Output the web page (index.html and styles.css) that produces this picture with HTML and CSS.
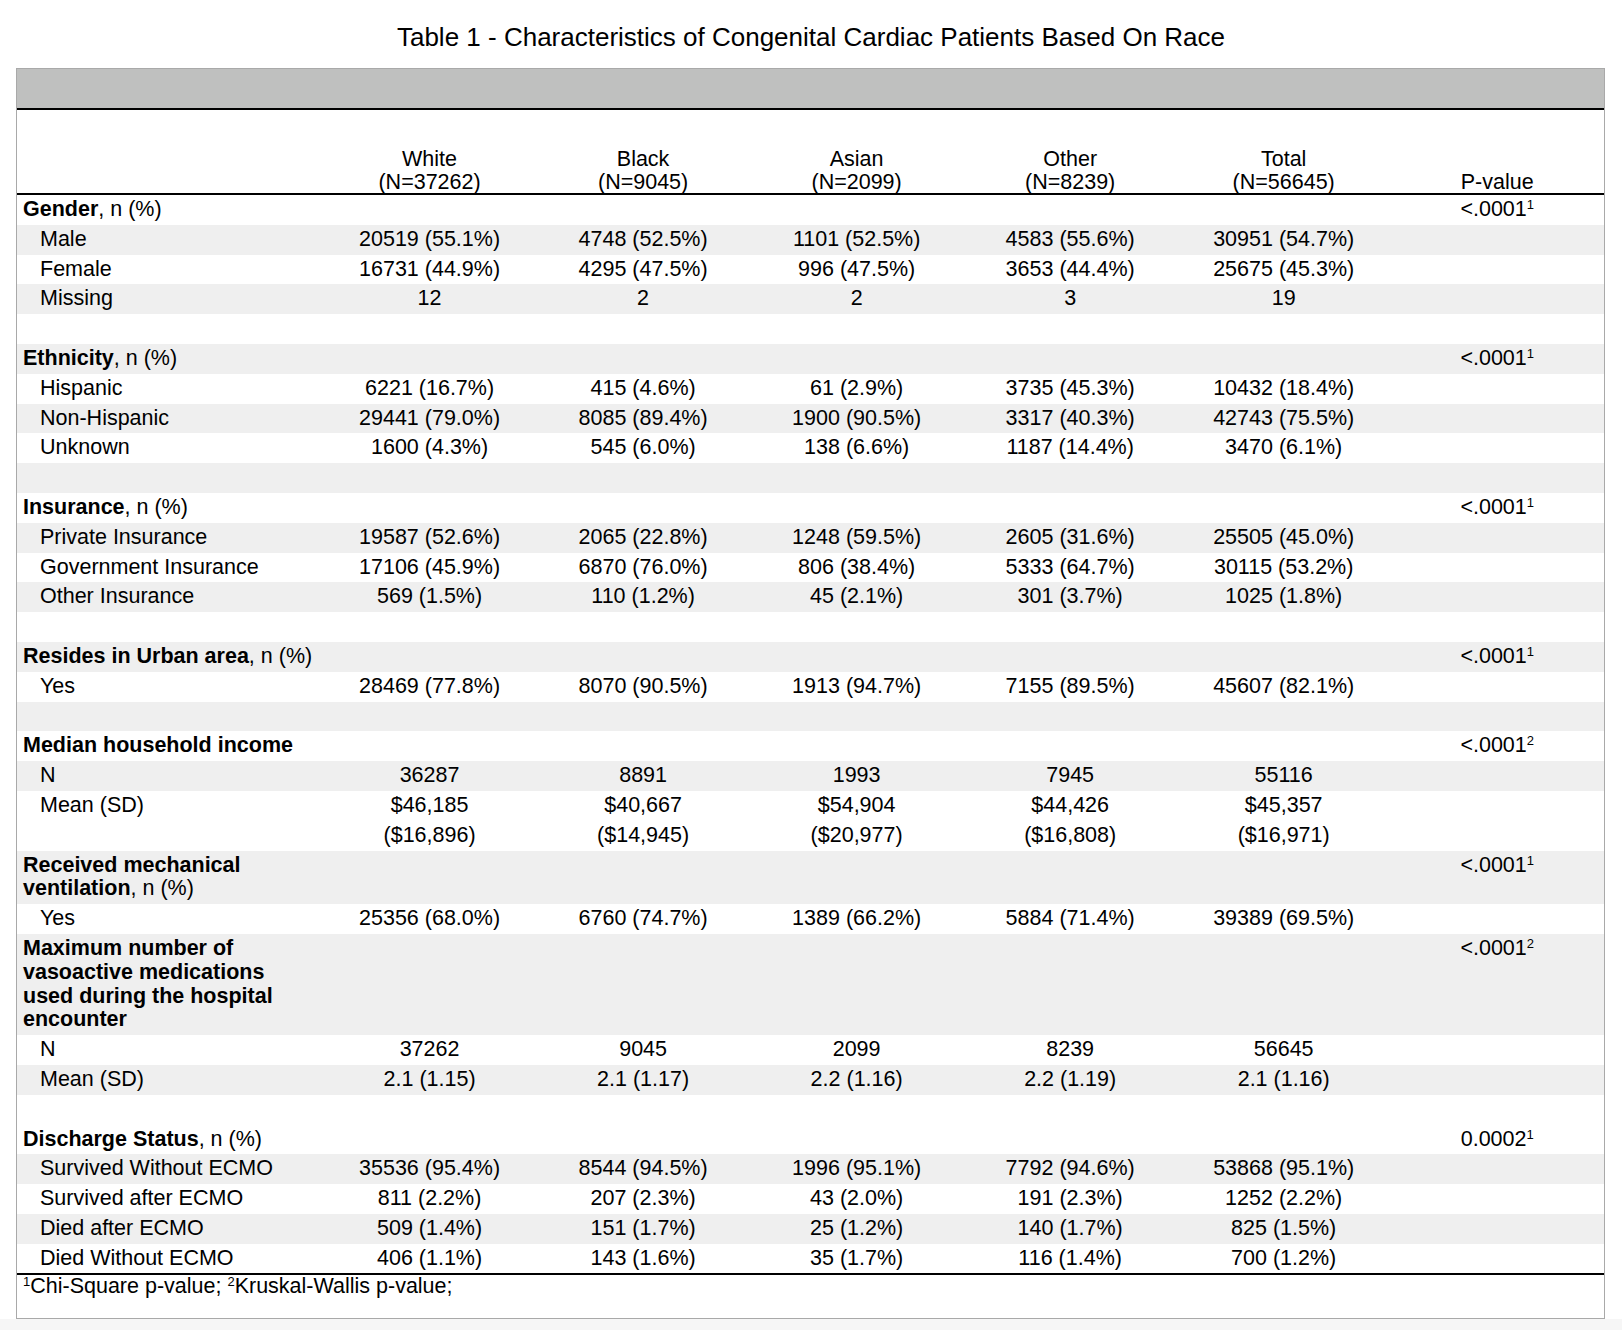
FILE: index.html
```html
<!DOCTYPE html>
<html lang="en">
<head>
<meta charset="utf-8">
<title>Table 1</title>
<link rel="stylesheet" href="styles.css">
</head>
<body>
<div class="page">
  <h1 class="title">Table 1 - Characteristics of Congenital Cardiac Patients Based On Race</h1>
  <div class="box">
    <div class="band"></div>
    <table class="t1">
      <colgroup>
        <col class="c-lab"><col class="c-num"><col class="c-num"><col class="c-num"><col class="c-num"><col class="c-num"><col class="c-p">
      </colgroup>
      <thead>
        <tr>
          <th class="lab"></th>
          <th>White<br>(N=37262)</th>
          <th>Black<br>(N=9045)</th>
          <th>Asian<br>(N=2099)</th>
          <th>Other<br>(N=8239)</th>
          <th>Total<br>(N=56645)</th>
          <th>P-value</th>
        </tr>
      </thead>
      <tbody>
        <tr><td class="var"><b>Gender</b>, n (%)</td><td></td><td></td><td></td><td></td><td></td><td class="p">&lt;.0001<sup>1</sup></td></tr>
        <tr class="g"><td class="sub">Male</td><td>20519 (55.1%)</td><td>4748 (52.5%)</td><td>1101 (52.5%)</td><td>4583 (55.6%)</td><td>30951 (54.7%)</td><td></td></tr>
        <tr><td class="sub">Female</td><td>16731 (44.9%)</td><td>4295 (47.5%)</td><td>996 (47.5%)</td><td>3653 (44.4%)</td><td>25675 (45.3%)</td><td></td></tr>
        <tr class="g"><td class="sub">Missing</td><td>12</td><td>2</td><td>2</td><td>3</td><td>19</td><td></td></tr>
        <tr><td class="var">&nbsp;</td><td></td><td></td><td></td><td></td><td></td><td></td></tr>
        <tr class="g"><td class="var"><b>Ethnicity</b>, n (%)</td><td></td><td></td><td></td><td></td><td></td><td class="p">&lt;.0001<sup>1</sup></td></tr>
        <tr><td class="sub">Hispanic</td><td>6221 (16.7%)</td><td>415 (4.6%)</td><td>61 (2.9%)</td><td>3735 (45.3%)</td><td>10432 (18.4%)</td><td></td></tr>
        <tr class="g"><td class="sub">Non-Hispanic</td><td>29441 (79.0%)</td><td>8085 (89.4%)</td><td>1900 (90.5%)</td><td>3317 (40.3%)</td><td>42743 (75.5%)</td><td></td></tr>
        <tr><td class="sub">Unknown</td><td>1600 (4.3%)</td><td>545 (6.0%)</td><td>138 (6.6%)</td><td>1187 (14.4%)</td><td>3470 (6.1%)</td><td></td></tr>
        <tr class="g"><td class="var">&nbsp;</td><td></td><td></td><td></td><td></td><td></td><td></td></tr>
        <tr><td class="var"><b>Insurance</b>, n (%)</td><td></td><td></td><td></td><td></td><td></td><td class="p">&lt;.0001<sup>1</sup></td></tr>
        <tr class="g"><td class="sub">Private Insurance</td><td>19587 (52.6%)</td><td>2065 (22.8%)</td><td>1248 (59.5%)</td><td>2605 (31.6%)</td><td>25505 (45.0%)</td><td></td></tr>
        <tr><td class="sub">Government Insurance</td><td>17106 (45.9%)</td><td>6870 (76.0%)</td><td>806 (38.4%)</td><td>5333 (64.7%)</td><td>30115 (53.2%)</td><td></td></tr>
        <tr class="g"><td class="sub">Other Insurance</td><td>569 (1.5%)</td><td>110 (1.2%)</td><td>45 (2.1%)</td><td>301 (3.7%)</td><td>1025 (1.8%)</td><td></td></tr>
        <tr><td class="var">&nbsp;</td><td></td><td></td><td></td><td></td><td></td><td></td></tr>
        <tr class="g"><td class="var"><b>Resides in Urban area</b>, n (%)</td><td></td><td></td><td></td><td></td><td></td><td class="p">&lt;.0001<sup>1</sup></td></tr>
        <tr><td class="sub">Yes</td><td>28469 (77.8%)</td><td>8070 (90.5%)</td><td>1913 (94.7%)</td><td>7155 (89.5%)</td><td>45607 (82.1%)</td><td></td></tr>
        <tr class="g"><td class="var">&nbsp;</td><td></td><td></td><td></td><td></td><td></td><td></td></tr>
        <tr><td class="var"><b>Median household income</b></td><td></td><td></td><td></td><td></td><td></td><td class="p">&lt;.0001<sup>2</sup></td></tr>
        <tr class="g"><td class="sub">N</td><td>36287</td><td>8891</td><td>1993</td><td>7945</td><td>55116</td><td></td></tr>
        <tr class="dbl"><td class="sub">Mean (SD)</td><td>$46,185<br>($16,896)</td><td>$40,667<br>($14,945)</td><td>$54,904<br>($20,977)</td><td>$44,426<br>($16,808)</td><td>$45,357<br>($16,971)</td><td></td></tr>
        <tr class="g"><td class="var"><b>Received mechanical<br>ventilation</b>, n (%)</td><td></td><td></td><td></td><td></td><td></td><td class="p">&lt;.0001<sup>1</sup></td></tr>
        <tr><td class="sub">Yes</td><td>25356 (68.0%)</td><td>6760 (74.7%)</td><td>1389 (66.2%)</td><td>5884 (71.4%)</td><td>39389 (69.5%)</td><td></td></tr>
        <tr class="g"><td class="var"><b>Maximum number of<br>vasoactive medications<br>used during the hospital<br>encounter</b></td><td></td><td></td><td></td><td></td><td></td><td class="p">&lt;.0001<sup>2</sup></td></tr>
        <tr><td class="sub">N</td><td>37262</td><td>9045</td><td>2099</td><td>8239</td><td>56645</td><td></td></tr>
        <tr class="g"><td class="sub">Mean (SD)</td><td>2.1 (1.15)</td><td>2.1 (1.17)</td><td>2.2 (1.16)</td><td>2.2 (1.19)</td><td>2.1 (1.16)</td><td></td></tr>
        <tr><td class="var">&nbsp;</td><td></td><td></td><td></td><td></td><td></td><td></td></tr>
        <tr><td class="var"><b>Discharge Status</b>, n (%)</td><td></td><td></td><td></td><td></td><td></td><td class="p">0.0002<sup>1</sup></td></tr>
        <tr class="g"><td class="sub">Survived Without ECMO</td><td>35536 (95.4%)</td><td>8544 (94.5%)</td><td>1996 (95.1%)</td><td>7792 (94.6%)</td><td>53868 (95.1%)</td><td></td></tr>
        <tr><td class="sub">Survived after ECMO</td><td>811 (2.2%)</td><td>207 (2.3%)</td><td>43 (2.0%)</td><td>191 (2.3%)</td><td>1252 (2.2%)</td><td></td></tr>
        <tr class="g"><td class="sub">Died after ECMO</td><td>509 (1.4%)</td><td>151 (1.7%)</td><td>25 (1.2%)</td><td>140 (1.7%)</td><td>825 (1.5%)</td><td></td></tr>
        <tr><td class="sub">Died Without ECMO</td><td>406 (1.1%)</td><td>143 (1.6%)</td><td>35 (1.7%)</td><td>116 (1.4%)</td><td>700 (1.2%)</td><td></td></tr>
      </tbody>
      <tfoot>
        <tr><td colspan="7" class="foot"><sup>1</sup>Chi-Square p-value; <sup>2</sup>Kruskal-Wallis p-value;</td></tr>
      </tfoot>
    </table>
  </div>
</div>
</body>
</html>
```
FILE: styles.css
```css
html {
  background: #f6f6f6;
}
body {
  margin: 0;
  font-family: "Liberation Sans", Arial, Helvetica, sans-serif;
  color: #000;
}
.page {
  background: #fff;
  padding: 22px 0 0;
  width: 1622px;
}
.title {
  margin: 0 0 16px;
  font-size: 26px;
  line-height: 30px;
  font-weight: normal;
  text-align: center;
}
.box {
  margin-left: 16px;
  width: 1587px;
  border: 1px solid #a9a9a9;
  background: #fff;
}
.band {
  height: 39px;
  background: #bfc0bf;
  border-bottom: 2px solid #000;
}
.t1 {
  width: 1587px;
  border-collapse: separate;
  border-spacing: 0;
  table-layout: fixed;
  font-size: 21.5px;
  line-height: 23.8px;
}
.c-lab { width: 305.75px; }
.c-num { width: 213.5px; }
.c-p { width: 213.5px; }
.t1 th {
  font-weight: normal;
  text-align: center;
  vertical-align: bottom;
  line-height: 22.5px;
  padding: 38px 0 0;
  border-bottom: 2px solid #000;
}
.t1 td {
  padding: 3px 0;
  text-align: center;
  vertical-align: top;
  white-space: nowrap;
}
.t1 td.var {
  text-align: left;
  padding-left: 6px;
}
.t1 td.sub {
  text-align: left;
  padding-left: 23px;
}
.t1 tr.g td {
  background: #efefef;
}
.t1 tr.dbl td {
  padding: 0;
  line-height: 29.8px;
}
.t1 tr.dbl td.sub {
  padding-left: 23px;
}
.t1 b {
  font-weight: bold;
}
.t1 sup {
  font-size: 13px;
  line-height: 0;
  vertical-align: 7px;
}
.t1 td.foot {
  border-top: 2px solid #000;
  text-align: left;
  padding: 0 6px 19px;
}
```
